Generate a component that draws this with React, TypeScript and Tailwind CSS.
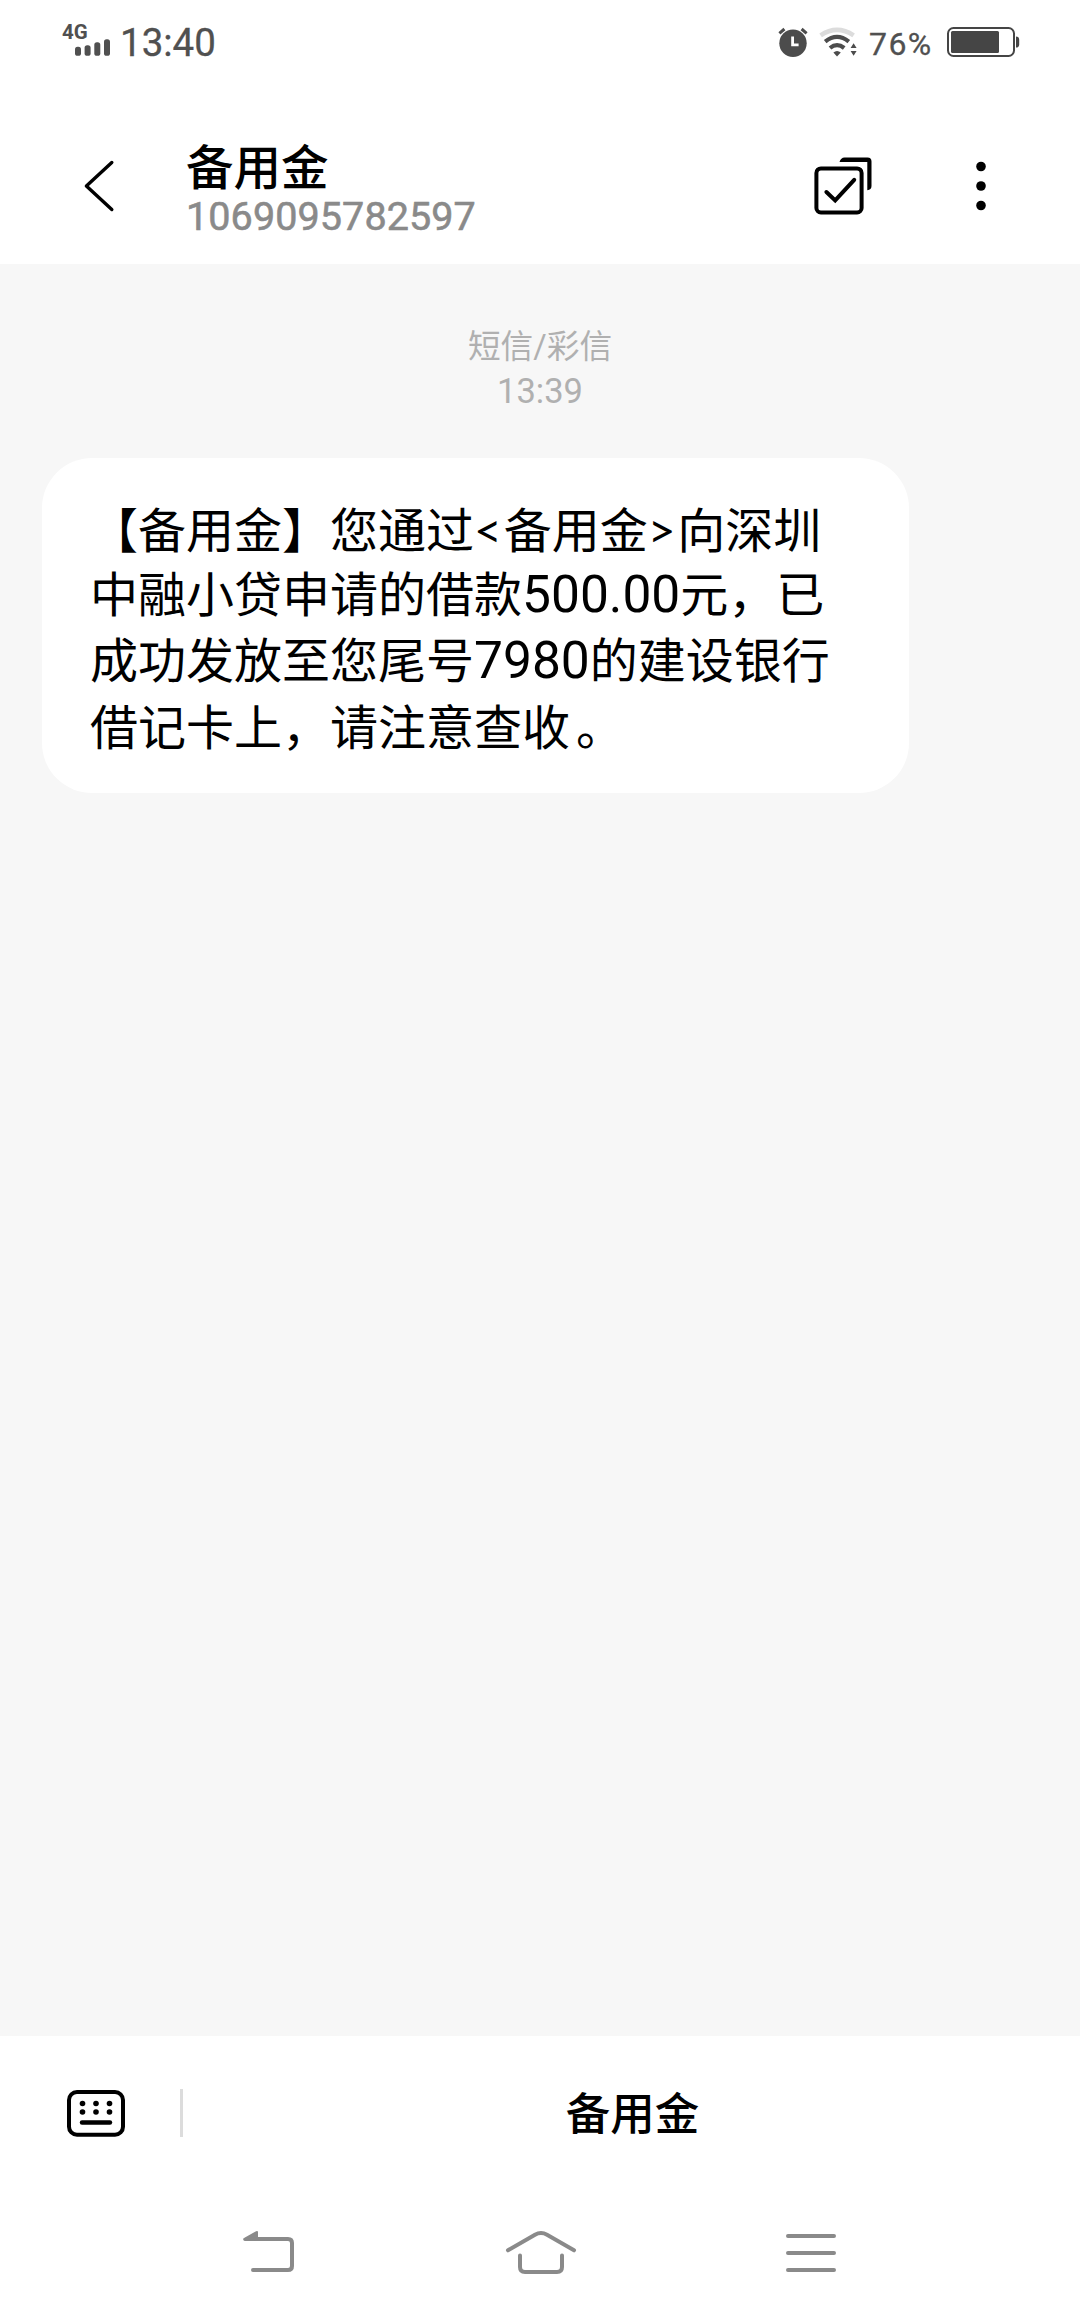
import React from "react";
import clsx from "clsx";

type Segment = { text: string; kind?: "number" | "symbol" | "stop" };

const MESSAGE_LINES: Segment[][] = [
  [
    { text: "【备用金】您通过" },
    { text: "<", kind: "symbol" },
    { text: "备用金" },
    { text: ">", kind: "symbol" },
    { text: "向深圳" },
  ],
  [{ text: "中融小贷申请的借款" }, { text: "500.00", kind: "number" }, { text: "元，已" }],
  [{ text: "成功发放至您尾号" }, { text: "7980", kind: "number" }, { text: "的建设银行" }],
  [{ text: "借记卡上，请注意查收" }, { text: "。", kind: "stop" }],
];

function SignalIcon() {
  return (
    <svg className="ml-3 h-[17px] w-[35px]" viewBox="75 39.5 35 17" fill="#505050">
      <rect x="75" y="47.3" width="6" height="9" rx="2.6" />
      <rect x="84.6" y="45.7" width="6" height="10.6" rx="2.6" />
      <rect x="94.3" y="42.7" width="6" height="13.6" rx="2.6" />
      <rect x="104" y="39.7" width="6" height="16.6" rx="2.6" />
    </svg>
  );
}

function AlarmIcon() {
  return (
    <svg className="h-[30px] w-[30px]" viewBox="778 27 30 30" fill="none">
      <circle cx="793" cy="43.3" r="13.7" fill="#4c4c4c" />
      <path d="M779.4 33.4l5-4.4M806.6 33.4l-5-4.4" stroke="#4c4c4c" strokeWidth="3" />
      <path d="M792.6 36.5v8.3h6" stroke="#fff" strokeWidth="2.8" />
    </svg>
  );
}

function WifiIcon() {
  return (
    <svg className="ml-[11px] h-[30px] w-[38px]" viewBox="819 27 38 30" fill="none">
      <path d="M820.6 35.4Q837 24.4 853.6 35.4" stroke="#dcdcdc" strokeWidth="4.6" />
      <path d="M825.2 41.6Q837 32.2 848.8 41.6" stroke="#4c4c4c" strokeWidth="4.2" />
      <path d="M830 48Q837 42.2 844.2 48" stroke="#4c4c4c" strokeWidth="4.2" />
      <path d="M833.4 52.6Q837 49.6 840.8 52.6L837 56.4z" fill="#4c4c4c" />
      <path d="M850.6 48l3-4.8 3 4.8zM850.6 51h6l-3 4.8z" fill="#4c4c4c" />
    </svg>
  );
}

function BatteryIcon() {
  return (
    <svg className="ml-[14px] h-[30px] w-[73px]" viewBox="947 27 73 30" fill="none">
      <rect x="948" y="28" width="66" height="28" rx="5.5" stroke="#454545" strokeWidth="2" />
      <rect x="951" y="31" width="48" height="22" rx="1.5" fill="#454545" />
      <path d="M1016 36.4q3.2 0 3.2 3.4v4.4q0 3.4-3.2 3.4z" fill="#454545" />
    </svg>
  );
}

function StatusBar() {
  return (
    <div className="flex h-[84px] items-center justify-between pr-[60px] pl-[62px]">
      <div className="flex h-[84px] items-start text-[#505050]">
        <div className="flex w-[48px] flex-col pt-[25px]">
          <span className="h-[15px] font-[Roboto] text-[20.5px] leading-[15px] font-bold">4G</span>
          <div className="-mt-px ml-px">
            <SignalIcon />
          </div>
        </div>
        <span className="ml-[10px] pt-[23px] font-[Roboto] text-[38.5px] leading-[40px] [-webkit-text-stroke:0.3px_#505050]">
          13:40
        </span>
      </div>
      <div className="flex items-center">
        <AlarmIcon />
        <WifiIcon />
        <span className="ml-3 w-[64px] pt-[3px] font-[Roboto] text-[32px] leading-[40px] tracking-[1.4px] whitespace-nowrap text-[#505050] [-webkit-text-stroke:0.3px_#505050]">
          76%
        </span>
        <BatteryIcon />
      </div>
    </div>
  );
}

function Header() {
  return (
    <header className="flex h-[180px] pt-[50px]">
      <button className="mt-[25px] ml-[83px] h-[54px] w-[32px]" aria-label="返回">
        <svg className="h-[54px] w-[32px]" viewBox="83 159 32 54" fill="none">
          <path
            d="M111.8 162.5L86.4 186l25.4 23.5"
            stroke="#000"
            strokeWidth="3.4"
            strokeLinecap="round"
            strokeLinejoin="round"
          />
        </svg>
      </button>
      <div className="ml-[71px] w-[620px] pt-[7px]">
        <h1 className="h-[56px] text-[47.5px] leading-[56px] font-medium text-black">备用金</h1>
        <p className="-mt-[2px] font-[Roboto] text-[39.5px] leading-[44px] tracking-[0.1px] text-[#8a8a8a] [-webkit-text-stroke:0.6px_#8a8a8a]">
          1069095782597
        </p>
      </div>
      <svg className="mt-[22px] ml-[7px] h-[60px] w-[60px]" viewBox="813 156 60 60" fill="none">
        <rect x="816.4" y="168.4" width="45.2" height="44" rx="4.5" stroke="#000" strokeWidth="4" />
        <path d="M826.4 192l8.8 8.4 19-20.6" stroke="#000" strokeWidth="4" strokeLinecap="round" />
        <path d="M839.5 162q1.4-4.6 5-4.6h23q4 0 4 4v24.6q0 4-4.2 4.2V162z" fill="#000" />
      </svg>
      <svg className="mt-[26px] ml-[102px] h-[52px] w-[12px]" viewBox="975 160 12 52">
        <circle cx="981" cy="166.5" r="4.8" />
        <circle cx="981" cy="186" r="4.8" />
        <circle cx="981" cy="205.5" r="4.8" />
      </svg>
    </header>
  );
}

function MessageLine({ segments }: { segments: Segment[] }) {
  return (
    <p className="h-[66.2px] text-[48px] leading-[66.2px] whitespace-nowrap text-black">
      {segments.map((segment) => (
        <span
          key={segment.text}
          className={clsx(
            segment.kind === "number" && "font-[Roboto] text-[51.5px] leading-none",
            segment.kind === "symbol" && "font-[Lato] tracking-[1.8px]",
            segment.kind === "stop" && "ml-[6px]"
          )}
        >
          {segment.text}
        </span>
      ))}
    </p>
  );
}

function Conversation() {
  return (
    <main className="h-[1772px] bg-[#f7f7f7] pt-[61px]">
      <div className="flex flex-col items-center text-[#b0b0b0]">
        <span className="text-[32.7px] leading-[44px]">短信/彩信</span>
        <span className="font-[Roboto] text-[34.5px] leading-[44px]">13:39</span>
      </div>
      <div className="mt-[45px] ml-[42px] h-[335px] w-[867px] rounded-[50px] bg-white pt-[39px] pl-[48px]">
        {MESSAGE_LINES.map((segments) => (
          <MessageLine key={segments[0].text} segments={segments} />
        ))}
      </div>
    </main>
  );
}

function ActionBar() {
  return (
    <footer className="flex h-[154px] items-center">
      <svg className="ml-[67px] h-[47px] w-[58px]" viewBox="67 2090 58 47" fill="none">
        <rect x="69" y="2092" width="54" height="42.8" rx="8" stroke="#000" strokeWidth="4" />
        <g fill="#000">
          <circle cx="82.5" cy="2103.5" r="2.8" />
          <circle cx="96" cy="2103.5" r="2.8" />
          <circle cx="109.5" cy="2103.5" r="2.8" />
          <circle cx="82.5" cy="2112" r="2.8" />
          <circle cx="96" cy="2112" r="2.8" />
          <circle cx="109.5" cy="2112" r="2.8" />
        </g>
        <path d="M82 2122.5h28" stroke="#000" strokeWidth="4.4" strokeLinecap="round" />
      </svg>
      <div className="ml-[55px] h-12 w-[3px] bg-[#dcdcdc]" />
      <button className="flex-1 pt-[3px] pl-[2px] text-center text-[44.5px] leading-[60px] font-medium text-black">
        备用金
      </button>
    </footer>
  );
}

function NavBar() {
  return (
    <nav className="flex h-[126px] items-start pt-[39px]">
      <svg className="ml-[242px] h-[46px] w-[54px]" viewBox="242 2229 54 46" fill="none">
        <path
          d="M243.2 2239.6q-.3-1 .8-1.7l12-6.6q2-.9 2 1v8.6h-13.2q-1.4 0-1.6-1.3z"
          fill="#8a8a8a"
        />
        <path
          d="M256 2239h32q4 0 4 4V2266q0 4-4 4H253"
          stroke="#8a8a8a"
          strokeWidth="4"
          strokeLinecap="round"
        />
      </svg>
      <svg
        className="ml-[209px] h-[46px] w-[72px]"
        viewBox="505 2229 72 46"
        fill="none"
        stroke="#8a8a8a"
        strokeWidth="4"
        strokeLinecap="round"
      >
        <path d="M508 2250.3l27-15.6q6-3.4 12 0l27 15.6" />
        <path d="M520 2255.5V2267q0 5 5 5H557q5 0 5-5V2255.5" />
      </svg>
      <svg
        className="ml-[209px] h-[46px] w-[50px]"
        viewBox="786 2229 50 46"
        stroke="#8a8a8a"
        strokeWidth="4"
        strokeLinecap="round"
      >
        <path d="M788 2236h46M788 2253h46M788 2270h46" />
      </svg>
    </nav>
  );
}

export default function App() {
  return (
    <div className="h-[2316px] w-[1080px] overflow-hidden bg-white font-[Roboto,'Noto_Sans_CJK_SC',sans-serif]">
      <StatusBar />
      <Header />
      <Conversation />
      <ActionBar />
      <NavBar />
    </div>
  );
}
